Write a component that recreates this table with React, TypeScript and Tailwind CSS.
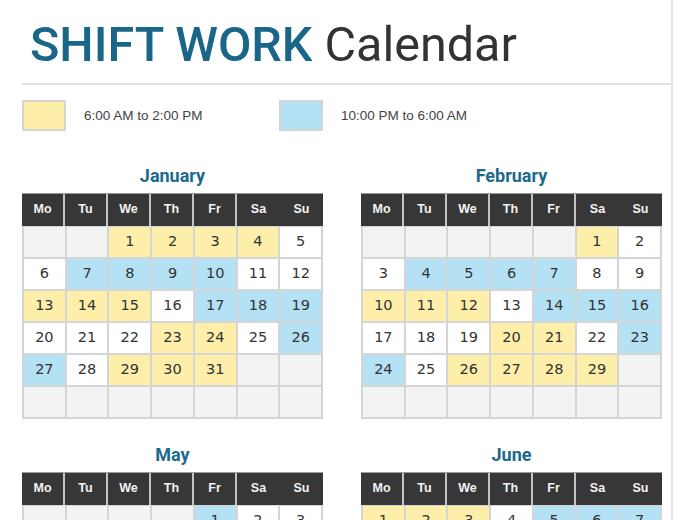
import React from 'react'

type Shade = 'y' | 'b' | 'w' | 'e'

const DAYS = ['Mo', 'Tu', 'We', 'Th', 'Fr', 'Sa', 'Su']

interface Month {
  name: string
  offset: number
  // shade for each day of the month, in order
  shades: string
}

const MONTHS: Month[] = [
  { name: 'January', offset: 2, shades: 'yyyywwbbbbwwyyywbbbwwwyywbbwyyy' },
  { name: 'February', offset: 5, shades: 'ywwbbbbwwyyywbbbwwwyywbbwyyyy' },
  { name: 'May', offset: 4, shades: 'bwwyyywbbbbwwyyywbbbwwwyywbbwyyy' },
  { name: 'June', offset: 0, shades: 'yyywbbbwwyyywbbbbwwyyywbbbwwwy' },
]

const CELL: Record<Shade, string> = {
  y: 'bg-[#fdeeaa]',
  b: 'bg-[#b4e1f4]',
  w: 'bg-white',
  e: 'bg-[#f3f3f3]',
}

function buildCells(m: Month) {
  const cells: { day?: number; shade: Shade }[] = []
  for (let i = 0; i < m.offset; i++) cells.push({ shade: 'e' })
  m.shades.split('').forEach((s, i) => cells.push({ day: i + 1, shade: s as Shade }))
  while (cells.length < 42) cells.push({ shade: 'e' })
  return cells
}

function MonthGrid({ month }: { month: Month }) {
  const cells = buildCells(month)
  return (
    <div className="w-[301px]">
      <h2 className="text-center text-[18px] leading-[22px] font-bold text-[#1b6a8c] font-['Roboto',sans-serif] mb-[6px]">
        {month.name}
      </h2>
      {/* Header */}
      <div className="grid grid-cols-7 bg-[#373737] h-[33px] border-t border-[#9a9a9a]">
        {DAYS.map((d, i) => (
          <div
            key={d}
            className={`flex items-center justify-center text-[12.5px] font-bold text-[#f2f2f2] font-['Liberation_Sans',sans-serif] ${
              i < 5 ? 'border-r-2 border-[#c4c4c4]' : ''
            }`}
          >
            {d}
          </div>
        ))}
      </div>
      {/* Days */}
      <div className="grid grid-cols-7 gap-[2px] bg-[#d5d5d5] border-2 border-t-0 border-[#d5d5d5] pt-[1px]">
        {cells.map((c, i) => (
          <div
            key={i}
            className={`h-[30px] flex items-center justify-center text-[14.5px] text-[#333] font-['DejaVu_Sans',sans-serif] ${CELL[c.shade]}`}
          >
            {c.day ?? ''}
          </div>
        ))}
      </div>
    </div>
  )
}

export default function App() {
  return (
    <div className="w-[675px] h-[520px] overflow-hidden bg-white">
      <div className="w-[673px] h-full border-r-2 border-[#e4e4e4]">
        {/* Title */}
        <h1 className="pt-[21px] pl-[30px] text-[48.5px] leading-none font-['Roboto',sans-serif] whitespace-nowrap">
          <span className="font-medium text-[#1a6688]">SHIFT WORK</span>{' '}
          <span className="text-[#333333]">Calendar</span>
        </h1>
        <div className="ml-[22px] mt-[13px] h-[2px] bg-[#e0e0e0]" />

        {/* Legend */}
        <div className="flex items-center pl-[22px] pt-[15px] text-[13.5px] text-[#444] font-['Liberation_Sans',sans-serif]">
          <div className="w-[44px] h-[31px] bg-[#fdeeaa] border-2 border-[#d6d6d0]" />
          <span className="ml-[18px] mt-[3px] w-[195px]">6:00 AM to 2:00 PM</span>
          <div className="w-[44px] h-[31px] bg-[#b4e1f4] border-2 border-[#d0d6d8]" />
          <span className="ml-[18px] mt-[3px]">10:00 PM to 6:00 AM</span>
        </div>

        {/* Months */}
        <div className="grid grid-cols-[301px_301px] gap-x-[38px] gap-y-[25px] pl-[22px] pt-[34px]">
          {MONTHS.map(m => (
            <MonthGrid key={m.name} month={m} />
          ))}
        </div>
      </div>
    </div>
  )
}
